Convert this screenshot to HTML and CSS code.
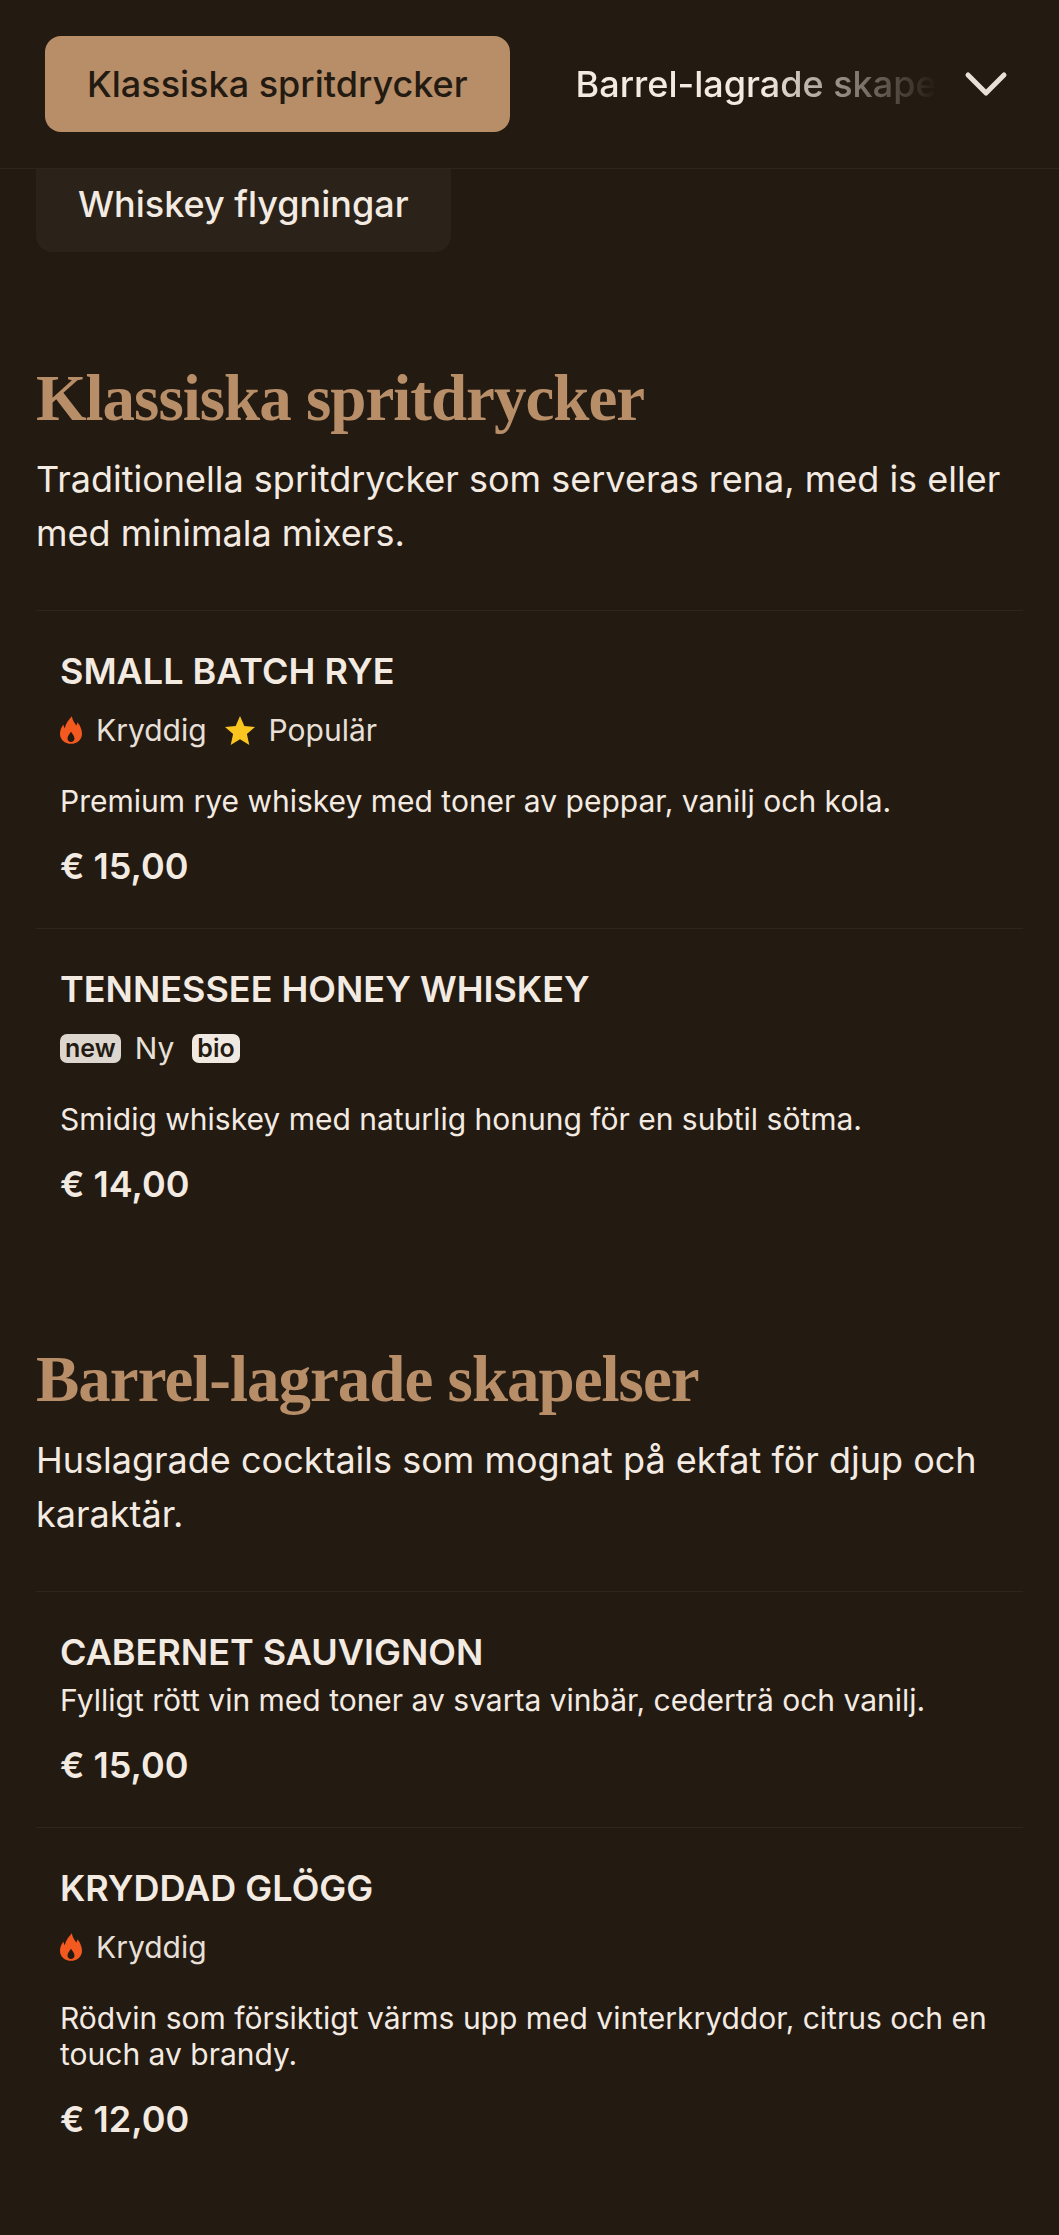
FILE: index.html

```html
<!DOCTYPE html>
<html lang="sv">
<head>
  <meta charset="UTF-8">
  <meta name="viewport" content="width=device-width, initial-scale=1.0">
  <title>Meny</title>
  <link rel="stylesheet" href="styles.css">
</head>
<body>
  <header class="topbar">
    <a class="tab tab-active">Klassiska spritdrycker</a>
    <div class="tab-fade"><a class="tab">Barrel-lagrade skapelser</a></div>
    <svg class="chevron" width="44" height="28" viewBox="0 0 44 28" fill="none" stroke="#e8e0d8" stroke-width="5" stroke-linecap="round" stroke-linejoin="round"><path d="M4 5 L22 23 L40 5"/></svg>
  </header>

  <main class="content">
    <a class="chip">Whiskey flygningar</a>

    <section class="section">
      <h2 class="section-title">Klassiska spritdrycker</h2>
      <p class="section-desc">Traditionella spritdrycker som serveras rena, med is eller med minimala mixers.</p>

      <article class="item">
        <h3 class="item-name">Small Batch Rye</h3>
        <div class="tags">
          <span class="tag">
            <svg class="flame" viewBox="0 0 24 30"><path fill="#f4591f" fill-rule="evenodd" d="M13 0c.4 4.500 2.800 7 4.800 10.200.7-1 1.100-2.200 1.200-3.700C22 10 24 14.500 24 19 24 25.500 18.800 30 12 30S0 25.500 0 19c0-3.800 1.600-7 3.800-10 .1 1.600.5 2.900 1.400 4C6 8.500 9.500 3.500 13 0zM12 17c-2.300 3-3.800 5.200-3.800 7.500 0 2.100 1.700 3.500 3.800 3.500s3.800-1.400 3.800-3.500c0-2.300-1.500-4.500-3.800-7.500z"/></svg>
            Kryddig
          </span>
          <span class="tag">
            <svg class="star" viewBox="0 0 30 29"><path fill="#fbc520" d="M15 0l4.300 10 10.700 1-8.100 7.100L24.300 29 15 23.300 5.700 29l2.400-10.900L0 11l10.700-1z"/></svg>
            Populär
          </span>
        </div>
        <p class="item-desc">Premium rye whiskey med toner av peppar, vanilj och kola.</p>
        <div class="price">€ 15,00</div>
      </article>

      <article class="item">
        <h3 class="item-name">Tennessee Honey Whiskey</h3>
        <div class="tags">
          <span class="tag"><span class="badge badge-new">new</span> Ny</span>
          <span class="tag"><span class="badge badge-bio">bio</span></span>
        </div>
        <p class="item-desc">Smidig whiskey med naturlig honung för en subtil sötma.</p>
        <div class="price">€ 14,00</div>
      </article>
    </section>

    <section class="section">
      <h2 class="section-title">Barrel-lagrade skapelser</h2>
      <p class="section-desc">Huslagrade cocktails som mognat på ekfat för djup och karaktär.</p>

      <article class="item">
        <h3 class="item-name">Cabernet Sauvignon</h3>
        <p class="item-desc item-desc-tight">Fylligt rött vin med toner av svarta vinbär, cederträ och vanilj.</p>
        <div class="price">€ 15,00</div>
      </article>

      <article class="item">
        <h3 class="item-name">Kryddad glögg</h3>
        <div class="tags">
          <span class="tag">
            <svg class="flame" viewBox="0 0 24 30"><path fill="#f4591f" fill-rule="evenodd" d="M13 0c.4 4.500 2.800 7 4.800 10.200.7-1 1.100-2.200 1.200-3.700C22 10 24 14.500 24 19 24 25.500 18.800 30 12 30S0 25.500 0 19c0-3.800 1.600-7 3.800-10 .1 1.600.5 2.900 1.400 4C6 8.500 9.500 3.500 13 0zM12 17c-2.300 3-3.800 5.200-3.800 7.500 0 2.100 1.700 3.500 3.800 3.500s3.800-1.400 3.800-3.500c0-2.300-1.500-4.500-3.800-7.500z"/></svg>
            Kryddig
          </span>
        </div>
        <p class="item-desc">Rödvin som försiktigt värms upp med vinterkryddor, citrus och en touch av brandy.</p>
        <div class="price">€ 12,00</div>
      </article>
    </section>
  </main>
</body>
</html>
```

FILE: styles.css

```css
* {
  box-sizing: border-box;
}

body {
  margin: 0;
  background-color: #231a12;
  color: #f3ebe2;
  font-family: "Inter", sans-serif;
}

.topbar {
  position: relative;
  z-index: 1;
  display: flex;
  align-items: center;
  height: 169px;
  padding: 0 51px 0 45px;
  background-color: #231a12;
  border-bottom: 1px solid #2e251c;
}

.tab {
  display: block;
  font-size: 36px;
  font-weight: 500;
  line-height: 96px;
  white-space: nowrap;
}

.tab-active {
  flex: none;
  padding: 0 42px;
  margin-right: 66px;
  background-color: #b88e68;
  border-radius: 16px;
  color: #231a12;
}

.tab-fade {
  flex: 1;
  min-width: 0;
  overflow: hidden;
  -webkit-mask-image: linear-gradient(to right, #000 50%, transparent 96%);
  mask-image: linear-gradient(to right, #000 50%, transparent 96%);
}

.chevron {
  flex: none;
  margin-left: 12px;
}

.content {
  padding: 0 36px;
}

.chip {
  display: inline-block;
  margin-top: -13px;
  padding: 0 42px;
  background-color: #2b2219;
  border-radius: 16px;
  font-size: 36px;
  font-weight: 500;
  line-height: 96px;
  vertical-align: top;
}

.section {
  padding-top: 106px;
  padding-bottom: 52px;
}

.section + .section {
  padding-top: 41px;
}

.section-title {
  margin: 0;
  color: #b88e68;
  font-family: "Liberation Serif", serif;
  font-size: 65px;
  font-weight: 700;
  letter-spacing: -1px;
  line-height: 80px;
}

.section-desc {
  margin: 14px 0 0;
  font-size: 36px;
  line-height: 54px;
}

.item {
  padding: 40px 24px 42px;
  border-top: 1px solid #2e251c;
}

.section-desc + .item {
  margin-top: 50px;
}

.item-name {
  margin: 0;
  font-size: 36px;
  font-weight: 600;
  line-height: 40px;
  text-transform: uppercase;
}

.tags {
  display: flex;
  gap: 18px;
  margin-top: 21px;
  height: 36px;
}

.tag {
  display: flex;
  align-items: center;
  gap: 14px;
  font-size: 30px;
  color: #e8e0d8;
}

.flame {
  width: 22px;
  height: 30px;
}

.star {
  width: 30px;
  height: 29px;
}

.badge {
  padding: 0 5px;
  border-radius: 7px;
  font-size: 25px;
  font-weight: 600;
  line-height: 29px;
  color: #231a12;
}

.badge-new {
  background-color: #dcd6cf;
}

.badge-bio {
  background-color: #f0e9e1;
}

.item-desc {
  margin: 35px 0 0;
  font-size: 30px;
  line-height: 36px;
}

.item-desc-tight {
  margin-top: 10px;
}

.price {
  margin-top: 27px;
  font-size: 36px;
  font-weight: 600;
  line-height: 40px;
}
```
